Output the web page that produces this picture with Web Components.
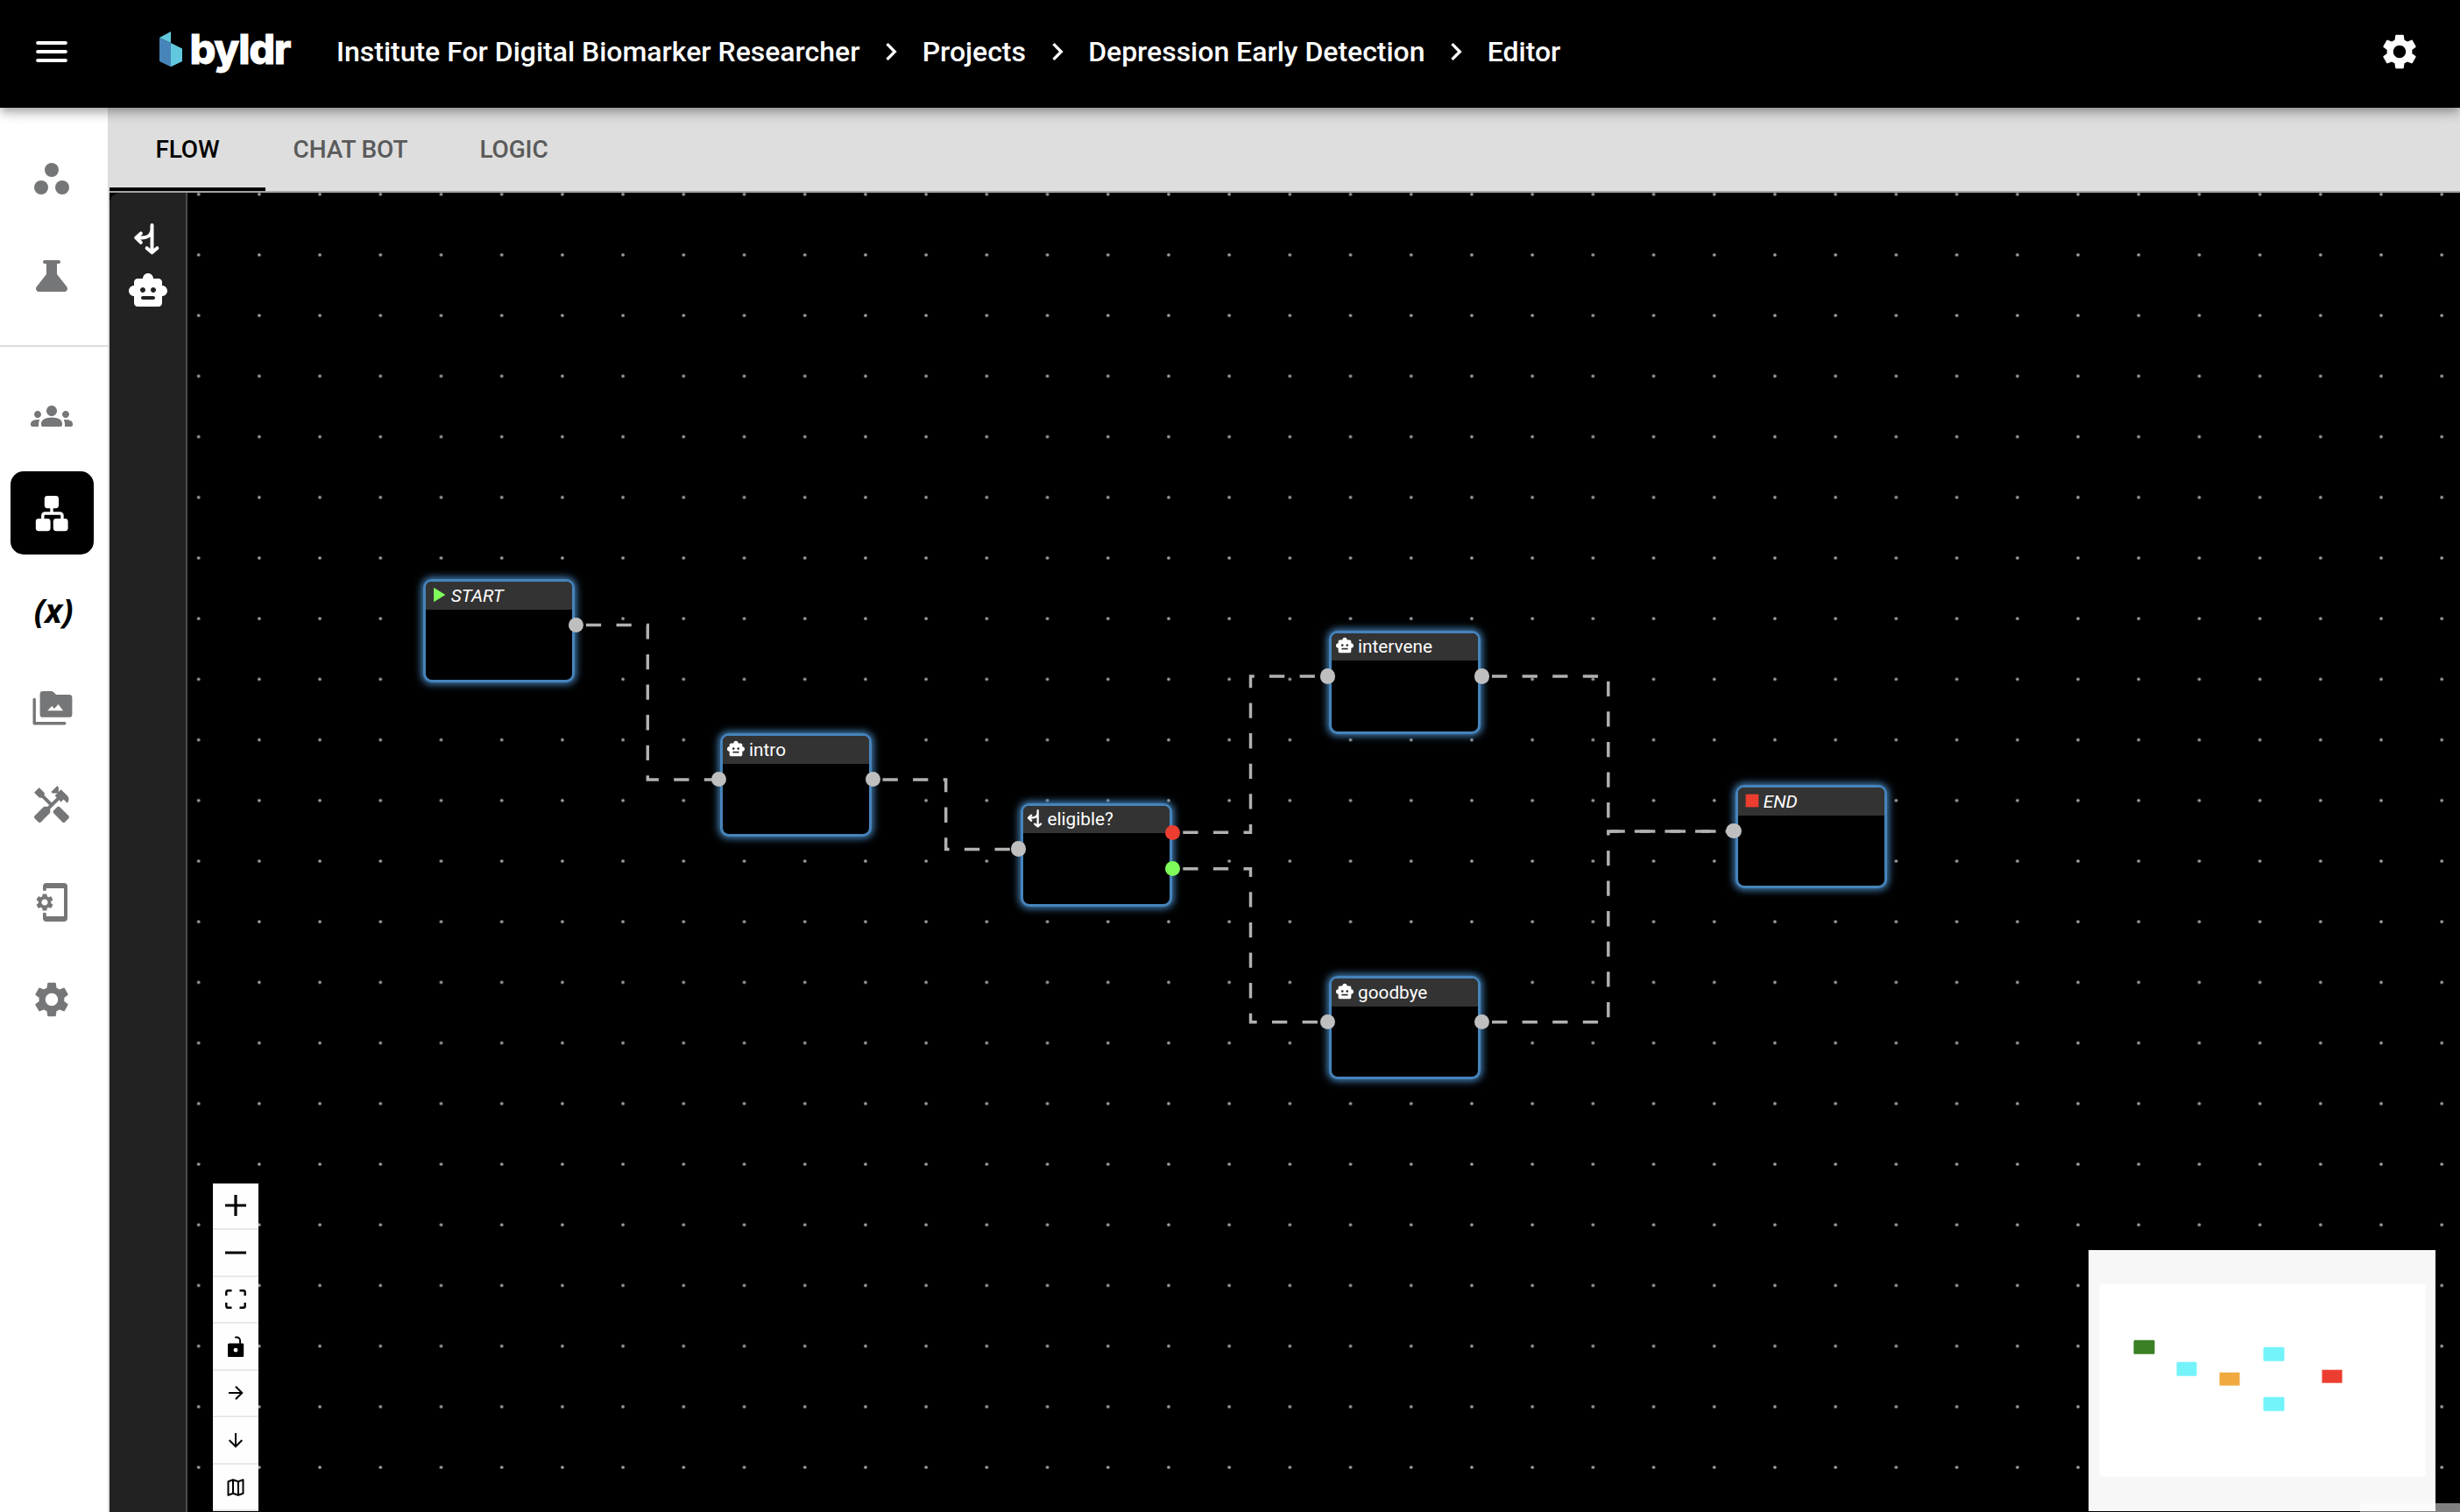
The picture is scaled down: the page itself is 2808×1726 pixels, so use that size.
<!DOCTYPE html>
<html lang="en">
<head>
<meta charset="utf-8">
<title>byldr – Editor</title>
<style>
html,body{margin:0;height:100%;background:#000;overflow:hidden}
body{font-family:Roboto,"Liberation Sans",sans-serif}
</style>
</head>
<body>
<byldr-app></byldr-app>
<script>
const GEAR='M19.14 12.94c.04-.3.06-.61.06-.94 0-.32-.02-.64-.07-.94l2.03-1.58c.18-.14.23-.41.12-.61l-1.92-3.32c-.12-.22-.37-.29-.59-.22l-2.39.96c-.5-.38-1.03-.7-1.62-.94l-.36-2.54c-.04-.24-.24-.41-.48-.41h-3.84c-.24 0-.43.17-.47.41l-.36 2.54c-.59.24-1.13.57-1.62.94l-2.39-.96c-.22-.08-.47 0-.59.22L2.74 8.87c-.12.21-.08.47.12.61l2.03 1.58c-.05.3-.09.63-.09.94s.02.64.07.94l-2.03 1.58c-.18.14-.23.41-.12.61l1.92 3.32c.12.22.37.29.59.22l2.39-.96c.5.38 1.03.7 1.62.94l.36 2.54c.05.24.24.41.48.41h3.84c.24 0 .44-.17.47-.41l.36-2.54c.59-.24 1.13-.56 1.62-.94l2.39.96c.22.08.47 0 .59-.22l1.92-3.32c.12-.22.07-.47-.12-.61l-2.01-1.58zM12 15.6c-1.98 0-3.6-1.62-3.6-3.6s1.62-3.6 3.6-3.6 3.6 1.62 3.6 3.6-1.62 3.6-3.6 3.6z';
const ln='fill="none" stroke="currentColor" stroke-linecap="round" stroke-linejoin="round"';
const ICONS={
 menu:`<path ${ln} stroke-width="2.1" d="M4.1 7h15.8M4.1 12h15.8M4.1 17h15.8"/>`,
 gear:`<path d="${GEAR}"/>`,
 chevron:'<path fill="none" stroke="currentColor" stroke-width="2" d="M9.3 6.7l5.3 5.3-5.3 5.3"/>',
 workspaces:'<circle cx="12" cy="7" r="4"/><circle cx="6" cy="17" r="4"/><circle cx="18" cy="17" r="4"/>',
 flask:'<path d="M8 3h8a1 1 0 0 1 0 2h-1v6l5.6 7.1c.9 1.3.1 2.9-1.5 2.9H4.9c-1.6 0-2.4-1.6-1.5-2.9L9 11V5H8a1 1 0 0 1 0-2z"/>',
 groups:'<path d="M12 12.75c1.63 0 3.07.39 4.24.9 1.08.48 1.76 1.56 1.76 2.73V17c0 .55-.45 1-1 1H7c-.55 0-1-.45-1-1v-.61c0-1.18.68-2.26 1.76-2.73 1.17-.52 2.61-.91 4.24-.91zM4 13c1.1 0 2-.9 2-2s-.9-2-2-2-2 .9-2 2 .9 2 2 2zm1.13 1.1c-.37-.06-.74-.1-1.13-.1-.99 0-1.93.21-2.78.58C.48 14.9 0 15.62 0 16.43V17c0 .55.45 1 1 1h3.5v-1.61c0-.83.23-1.61.63-2.29zM20 13c1.1 0 2-.9 2-2s-.9-2-2-2-2 .9-2 2 .9 2 2 2zm4 3.43c0-.81-.48-1.53-1.22-1.85-.85-.37-1.79-.58-2.78-.58-.39 0-.76.04-1.13.1.4.68.63 1.46.63 2.29V18H23c.55 0 1-.45 1-1v-.57zM12 6c1.66 0 3 1.34 3 3s-1.34 3-3 3-3-1.34-3-3 1.34-3 3-3z"/>',
 hierarchy:`<rect x="7.9" y="2" width="8.1" height="7.1" rx="1.7"/><rect x="2.9" y="15" width="8.4" height="7.1" rx="1.7"/><rect x="12.9" y="15" width="8.4" height="7.1" rx="1.7"/><path fill="none" stroke="currentColor" stroke-width="1.7" d="M12 8v4M6.9 16v-2.6q0-1.4 1.4-1.4h8.3q1.4 0 1.4 1.4V16"/>`,
 media:`<g transform="translate(0 -.3)"><path d="M7 2.8h4.800q.7 0 1.200.5L14.600 4.800H22a1.700 1.700 0 0 1 1.700 1.700V16a1.700 1.700 0 0 1-1.700 1.700H7A1.700 1.700 0 0 1 5.300 16V4.500A1.700 1.700 0 0 1 7 2.800zM9.600 13.900h8.900l-2.700-3.600-2.300 2.500-1.400-1.500z"/><path ${ln} stroke-width="1.7" d="M2.100 7.500v13.700h17.300"/></g>`,
 handyman:'<path d="M21.67 18.17l-5.3-5.3h-.99l-2.54 2.54v.99l5.3 5.3c.39.39 1.02.39 1.41 0l2.12-2.12c.39-.39.39-1.03 0-1.41z"/><path d="M17.34 10.19l1.41-1.41 2.12 2.12c1.17-1.17 1.17-3.07 0-4.24l-3.54-3.54-1.41 1.41V1.71L15.22 1l-3.54 3.54.71.71h2.83l-1.41 1.41 1.06 1.06-2.89 2.89L7.85 6.48V5.06L4.83 2.04 2 4.87l3.03 3.03h1.41l4.13 4.13-.85.85H7.6l-5.3 5.3c-.39.39-.39 1.02 0 1.41l2.12 2.12c.39.39 1.02.39 1.41 0l5.3-5.3v-2.12l5.15-5.15z"/>',
 phone:`<path fill-rule="evenodd" d="M9 1h10a2 2 0 0 1 2 2v18a2 2 0 0 1-2 2H9a2 2 0 0 1-2-2v-2.7q1-.9 1.900 0V20H19V4H8.900v1.400H7V3a2 2 0 0 1 2-2z"/><g transform="translate(8 12) scale(.5) translate(-12 -12)"><path d="${GEAR}"/></g>`,
 split:`<path ${ln} stroke-width="2" d="M14.250 4.500v15.300M11.300 17.600l2.950 2.500 2.950-2.500M7.900 9.200L5.100 11.700l2.800 2.700M5.500 11.700h2.600c3.600 0 6.150-1.700 6.150-5"/>`,
 robot:'<path d="M20 9V7c0-1.1-.9-2-2-2h-3c0-1.66-1.34-3-3-3S9 3.34 9 5H6c-1.1 0-2 .9-2 2v2c-1.66 0-3 1.34-3 3s1.34 3 3 3v4c0 1.1.9 2 2 2h12c1.1 0 2-.9 2-2v-4c1.66 0 3-1.34 3-3s-1.34-3-3-3zM7.5 11.5c0-.83.67-1.5 1.5-1.5s1.5.67 1.5 1.5S9.83 13 9 13s-1.5-.67-1.5-1.5zM15 17H9c-.55 0-1-.45-1-1s.45-1 1-1h6c.55 0 1 .45 1 1s-.45 1-1 1zm0-4c-.83 0-1.5-.67-1.5-1.5S14.17 10 15 10s1.500.67 1.500 1.500S15.830 13 15 13z"/>',
 play:'<path d="M4.500 3v18L19 12z"/>',
 stop:'<path d="M4 4h16v16H4z"/>',
 plus:'<path d="M0 10.400h10.400V0h3.200v10.400H24v3.200H13.600V24h-3.200V13.600H0z"/>',
 minus:'<path d="M0 10.500h24v3H0z"/>',
 fit:'<path fill="none" stroke="currentColor" stroke-width="2.4" d="M1.300 8V4.200q0-2 2-2H7.500M16.500 2.200h4.200q2 0 2 2V8M22.700 16v3.800q0 2-2 2h-4.200M7.500 21.800H3.300q-2 0-2-2V16"/>',
 unlock:`<path fill-rule="evenodd" d="M4.500 8.500H20q1.200 0 1.200 1.200v13q0 1.300-1.300 1.300H4.200Q3 24 3 22.700V10q0-1.500 1.500-1.500zM12 13.800a2.400 2.400 0 1 0 0 4.800 2.400 2.400 0 0 0 0-4.800z"/><path ${ln} stroke-width="1.9" d="M11.800 1.600c3.800-.6 5.300 1.600 5.300 4v4"/>`,
 right:'<path fill="none" stroke="currentColor" stroke-width="2" d="M4 12h15M12 4.700l7.300 7.300-7.300 7.300"/>',
 down:'<path fill="none" stroke="currentColor" stroke-width="2" d="M12 4v15M4.700 12l7.300 7.300 7.300-7.300"/>',
 map:`<path ${ln} stroke-width="2" d="M3.500 5.200L9 3.200l6 2 5.500-2v15.600L15 20.800l-6-2-5.500 2zM9 3.200v15.600M15 5.200v15.600"/>`
};
function define(name,html){
  customElements.define(name,class extends HTMLElement{
    connectedCallback(){
      if(this.shadowRoot)return;
      const t=document.createElement('template');
      t.innerHTML=typeof html==='function'?html(this):html;
      this.attachShadow({mode:'open'}).append(t.content.cloneNode(true));
    }
  });
}
define('b-icon',el=>{
  const s=el.getAttribute('size')||48;
  return `<style>:host{display:inline-flex;flex:none}svg{display:block;fill:currentColor}</style>
  <svg width="${s}" height="${s}" viewBox="0 0 24 24">${ICONS[el.getAttribute('name')]}</svg>`;
});
define('b-logo',`<style>
 :host{display:flex;align-items:center;width:170px;height:64px;color:#fff}
 svg{display:block;flex:none}
 span{font:800 47px/64px Inter,sans-serif;letter-spacing:-1.3px;margin-left:7.5px;white-space:nowrap;-webkit-text-stroke:.8px #fff}
</style>
<svg width="28" height="42" viewBox="0 0 28 42"><path fill="#4684b9" d="M1 8v27l13 6.300V14z"/><path fill="#62c8de" d="M1 8L14 1v13z"/><path fill="#62c8de" d="M14 14l13 6.500V35l-13 6.300z"/></svg>
<span>byldr</span>`);
define('b-crumbs',`<style>
 :host{display:flex;align-items:center;color:#fff;font-weight:500;font-size:32px;line-height:48px;white-space:nowrap}
 b-icon{margin:0 15.600px}
 span{letter-spacing:-.02px}
</style>
<span>Institute For Digital Biomarker Researcher</span><b-icon name="chevron" size="40"></b-icon><span>Projects</span><b-icon name="chevron" size="40"></b-icon><span>Depression Early Detection</span><b-icon name="chevron" size="40"></b-icon><span>Editor</span>`);
define('b-header',`<style>
 :host{display:flex;align-items:flex-start;flex:none;box-sizing:border-box;height:123px;background:#000;color:#fff;padding:35px 45px 0 35px;position:relative;z-index:5;
 box-shadow:0 4px 8px -2px rgba(0,0,0,.2),0 8px 10px rgba(0,0,0,.14),0 2px 20px rgba(0,0,0,.12)}
 b-logo{margin:-11px 0 0 98px}
 b-crumbs{margin-left:33px}
 .end{margin-left:auto}
</style>
<b-icon name="menu"></b-icon><b-logo></b-logo><b-crumbs></b-crumbs><b-icon class="end" name="gear"></b-icon>`);
define('b-nav-item',`<style>
 :host{display:flex;align-items:center;justify-content:center;width:95px;height:95px;border-radius:15px;color:#757678}
 :host([active]){background:#000;color:#fff}
 ::slotted(span){font:italic 700 37px/48px "Noto Sans",sans-serif;color:#000;margin-left:4px}
</style><slot></slot>`);
define('b-sidebar',`<style>
 :host{display:flex;flex-direction:column;align-items:flex-start;gap:16px;box-sizing:border-box;width:125px;flex:none;background:#fff;border-right:2px solid #dcdddd;padding-top:33px}
 b-nav-item{margin-left:11.700px}
 hr{width:123px;height:2px;border:0;margin:16px 0 15px;background:#ddd}
</style>
<b-nav-item><b-icon name="workspaces"></b-icon></b-nav-item>
<b-nav-item><b-icon name="flask"></b-icon></b-nav-item>
<hr>
<b-nav-item><b-icon name="groups"></b-icon></b-nav-item>
<b-nav-item active><b-icon name="hierarchy"></b-icon></b-nav-item>
<b-nav-item><span>(x)</span></b-nav-item>
<b-nav-item><b-icon name="media"></b-icon></b-nav-item>
<b-nav-item><b-icon name="handyman"></b-icon></b-nav-item>
<b-nav-item><b-icon name="phone"></b-icon></b-nav-item>
<b-nav-item><b-icon name="gear"></b-icon></b-nav-item>`);
define('b-tabs',`<style>
 :host{display:flex;flex:none;box-sizing:border-box;height:97px;background:#dedede;border-bottom:2px solid #a5a5a5}
 div{box-sizing:border-box;display:flex;justify-content:center;height:95px;padding-top:30px;font-weight:500;font-size:28px;line-height:35px;letter-spacing:-.15px;color:#5a5a5a}
 .on{color:#000;border-bottom:4px solid #000}
</style>
<div class="on" style="width:178px">FLOW</div><div style="width:194px">CHAT BOT</div><div style="width:179px">LOGIC</div>`);
define('b-palette',`<style>
 :host{display:flex;flex-direction:column;align-items:center;gap:12px;box-sizing:border-box;width:89px;flex:none;background:#222;border-right:2px solid #484b50;border-top-left-radius:12px;padding-top:28px;color:#fff}
</style>
<b-icon name="split"></b-icon><b-icon name="robot"></b-icon>`);
define('flow-node',el=>{
  const k=el.getAttribute('icon');
  return `<style>
 :host{position:absolute;box-sizing:border-box;width:173px;height:118px;border:3.46px solid #4684bb;border-radius:10px;background:#000;box-shadow:0 0 9px 2px #4684bb;left:${el.getAttribute('x')}px;top:${el.getAttribute('y')}px}
 .t{display:flex;align-items:center;box-sizing:border-box;height:31.5px;background:#333;border-radius:6px 6px 0 0;padding-left:3.7px;gap:4px;color:#fff;font-size:20.76px;line-height:24px}
 b-icon{margin-top:-2px}
 :host([icon=play]) .t,:host([icon=stop]) .t{font-style:italic;padding-left:4.500px;gap:2px}
 :host([icon=split]) .t{padding-left:0;gap:0}
 :host([icon=split]) b-icon{margin-top:-3.500px}
 :host([icon=play]) b-icon{color:#7ffb5a}
 :host([icon=stop]) b-icon{color:#ec3e30}
 i{position:absolute;width:17.300px;height:17.300px;border-radius:50%;background:#bfbfbf;margin:-8.650px}
 .l{left:-5.200px}.r{left:171.300px}
</style><div class="t"><b-icon name="${k}" size="${k==='split'?28:22}"></b-icon><slot></slot></div>`+
 (k!=='play'?'<i class="l" style="top:49.200px"></i>':'')+
 (k==='split'?'<i class="r" style="top:30.500px;background:#ec3e30"></i><i class="r" style="top:71.800px;background:#7ffb5a"></i>':k!=='stop'?'<i class="r" style="top:49.200px"></i>':'');
});
define('flow-controls',`<style>
 :host{display:flex;flex-direction:column;position:absolute;left:243px;top:1350.500px;width:52px;background:#fefefe;color:#000}
 div{box-sizing:border-box;height:53.550px;border-bottom:2px solid #e8e8e8;display:flex;align-items:center;justify-content:center}
</style>
<div><b-icon name="plus" size="24"></b-icon></div><div><b-icon name="minus" size="24"></b-icon></div><div><b-icon name="fit" size="24"></b-icon></div><div><b-icon name="unlock" size="24"></b-icon></div><div><b-icon name="right" size="24"></b-icon></div><div><b-icon name="down" size="24"></b-icon></div><div><b-icon name="map" size="24"></b-icon></div>`);
define('flow-minimap',`<style>
 :host{display:block;position:absolute;left:2383.500px;top:1427.300px;width:396.500px;height:297.500px;background:#f7f7f7}
 svg{display:block}
</style>
<svg width="396.5" height="297.5" viewBox="2383.5 1427.3 396.5 297.5"><path fill="#fff" d="M2396 1466.500h372v219.300h-372z"/>
<rect x="2435" y="1530" width="24" height="16" rx="1.5" fill="#3a8024"/>
<rect x="2484" y="1555" width="23" height="16" rx="1.5" fill="#74f3fa"/>
<rect x="2533" y="1567" width="23" height="15" fill="#f0a93e"/>
<rect x="2583" y="1538" width="24" height="16" rx="1.5" fill="#74f3fa"/>
<rect x="2583" y="1595" width="24" height="16" rx="1.5" fill="#74f3fa"/>
<rect x="2650" y="1564" width="23" height="15" fill="#ec3e30"/></svg>`);
define('flow-canvas',`<style>
 :host{display:block;flex:1;min-width:0;position:relative;overflow:hidden;background:#000}
 /* Nodes and edges share one coordinate space whose origin is the window corner. */
 .space{position:absolute;left:-214px;top:-220px;width:2808px;height:1726px}
 svg{display:block}
 .attr{position:absolute;left:2694px;top:1716px;width:114px;height:10px;background:rgba(255,255,255,.5)}
</style>
<div class="space">
<svg width="2808" height="1726">
<defs><pattern id="dots" x="192.1" y="187.1" width="69.203" height="69.203" patternUnits="userSpaceOnUse"><circle cx="34.6" cy="34.6" r="1.85" fill="#a2a4a8"/></pattern></defs>
<rect width="2808" height="1726" fill="url(#dots)"/>
<g fill="none" stroke="#b1b1b3" stroke-width="3.46" stroke-dasharray="17.3">
<path d="M668.9 713.5H739.3V890H820"/>
<path d="M1007.5 890H1079.7V969.6H1163"/>
<path d="M1350.3 950.2H1427.5V772.1H1515"/>
<path d="M1350.3 991.7H1427.5V1166.8H1515"/>
<path d="M1703 772.1H1835.8V949H1979"/>
<path d="M1703 1166.8H1835.8V949H1979"/>
</g></svg>
<flow-node icon="play" x="483.3" y="661">START</flow-node>
<flow-node icon="robot" x="822.4" y="837.4">intro</flow-node>
<flow-node icon="split" x="1164.5" y="916.7">eligible?</flow-node>
<flow-node icon="robot" x="1517.4" y="719.7">intervene</flow-node>
<flow-node icon="robot" x="1517.4" y="1114.2">goodbye</flow-node>
<flow-node icon="stop" x="1981.2" y="896.3">END</flow-node>
<flow-controls></flow-controls>
<flow-minimap></flow-minimap>
<div class="attr"></div>
</div>`);
define('byldr-app',`<style>
 :host{display:flex;flex-direction:column;width:2808px;height:1726px;overflow:hidden;background:#000}
 .body,.work{display:flex;flex:1;min-height:0}
 .main{display:flex;flex-direction:column;flex:1;min-width:0;background:#000}
</style>
<b-header></b-header>
<div class="body"><b-sidebar></b-sidebar>
<div class="main"><b-tabs></b-tabs><div class="work"><b-palette></b-palette><flow-canvas></flow-canvas></div></div></div>`);
</script>
</body>
</html>
